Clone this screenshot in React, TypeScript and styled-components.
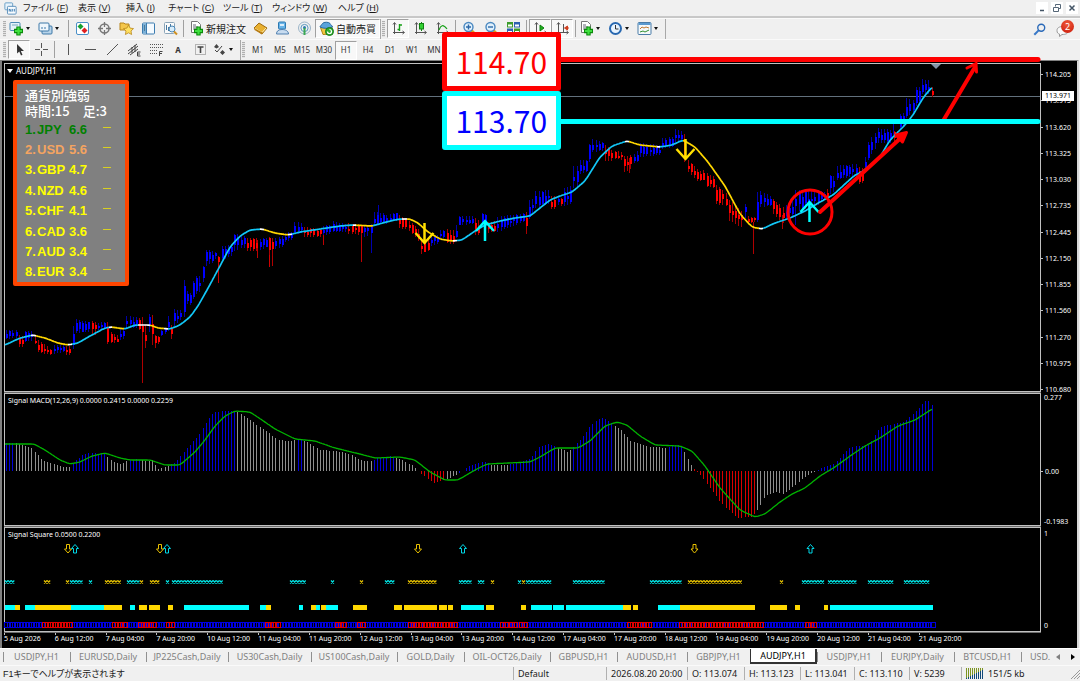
import React from "react";
import styled, { createGlobalStyle, css } from "styled-components";

/* ---------- data ---------- */

type Pt = [number, number];
type Span = [number, number, string];

const BLUE = "#0000ff";
const RED = "#ff0000";
const CYAN = "#00ffff";
const GOLD = "#ffd700";
const SKY = "#12c8f8";
const STEP = 3.17;
const BARS = Array.from({ length: 293 }, (_, i) => 6 + i * STEP);

/* [end x, direction, high, low, high at end, low at end] */
const swings: [number, "B" | "R", number, number, number, number][] = [
  [17, "B", 330, 339, 330, 338], [22, "R", 334, 347, 336, 347], [32, "B", 331, 342, 331, 341],
  [36, "R", 336, 343, 337, 345], [51, "R", 339, 352, 349, 355], [65, "B", 345, 354, 345, 352],
  [70, "R", 346, 355, 346, 355], [73, "B", 326, 349, 326, 349], [90, "B", 319, 333, 322, 332],
  [96, "R", 321, 333, 322, 335], [105, "B", 323, 330, 322, 329], [108, "R", 322, 344, 322, 344],
  [118, "R", 331, 344, 336, 342], [125, "B", 328, 341, 328, 338], [137, "B", 316, 328, 317, 328],
  [140, "R", 318, 330, 318, 330], [144, "R", 317, 341, 317, 341], [147, "R", 325, 348, 325, 348],
  [150, "B", 314, 332, 314, 332], [153, "R", 315, 345, 315, 345], [159, "R", 334, 350, 336, 343],
  [165, "B", 331, 337, 328, 334], [169, "B", 315, 332, 316, 331], [172, "R", 325, 339, 325, 339],
  [182, "B", 309, 328, 310, 318], [185, "B", 280, 317, 280, 317], [192, "B", 290, 304, 295, 305],
  [196, "B", 280, 300, 284, 295], [202, "B", 276, 294, 276, 291], [205, "B", 266, 282, 266, 281],
  [214, "B", 250, 266, 251, 262], [217, "B", 252, 259, 252, 259], [220, "R", 256, 262, 256, 262],
  [232, "B", 246, 262, 245, 255], [240, "B", 233, 252, 235, 249], [245, "B", 236, 248, 236, 248],
  [257, "R", 238, 251, 238, 251], [267, "B", 239, 251, 238, 247], [274, "R", 236, 254, 238, 256],
  [283, "B", 238, 250, 236, 246], [293, "B", 233, 242, 232, 240], [303, "B", 222, 234, 223, 233],
  [320, "R", 227, 237, 229, 237], [330, "B", 226, 236, 225, 234], [347, "B", 221, 232, 224, 232],
  [363, "R", 223, 234, 225, 235], [373, "B", 225, 237, 224, 234], [384, "B", 212, 226, 213, 222],
  [390, "B", 215, 225, 214, 222], [396, "B", 213, 221, 213, 221], [408, "R", 213, 228, 220, 229],
  [421, "R", 220, 230, 232, 244], [430, "R", 240, 254, 239, 250], [440, "B", 236, 246, 234, 243],
  [445, "B", 230, 238, 230, 238], [454, "R", 229, 243, 230, 244], [459, "B", 228, 240, 222, 236],
  [475, "B", 216, 225, 216, 224], [479, "R", 218, 235, 220, 235], [487, "B", 213, 227, 214, 228],
  [497, "R", 222, 233, 221, 231], [523, "B", 217, 232, 213, 222], [528, "R", 212, 234, 212, 234],
  [534, "B", 200, 220, 198, 213], [551, "B", 191, 208, 190, 203], [556, "R", 196, 209, 196, 209],
  [560, "B", 196, 205, 196, 204], [563, "R", 198, 206, 198, 206], [573, "B", 188, 206, 185, 203],
  [579, "B", 166, 188, 166, 184], [587, "B", 160, 174, 160, 172], [592, "B", 144, 163, 143, 160],
  [602, "B", 139, 152, 142, 151], [612, "R", 143, 161, 150, 161], [624, "R", 151, 159, 152, 160],
  [633, "R", 156, 172, 155, 168], [638, "B", 155, 163, 150, 162], [660, "B", 143, 157, 145, 155],
  [673, "B", 138, 149, 137, 147], [682, "B", 129, 143, 131, 142], [686, "R", 133, 162, 135, 162],
  [698, "R", 158, 170, 170, 182], [704, "R", 171, 181, 170, 180], [713, "R", 172, 186, 176, 188],
  [727, "R", 182, 204, 194, 206], [743, "R", 198, 220, 212, 228], [746, "B", 204, 218, 204, 218],
  [755, "R", 216, 224, 217, 222], [759, "B", 192, 222, 192, 222], [770, "B", 190, 207, 196, 206],
  [784, "R", 197, 211, 208, 224], [794, "B", 206, 219, 200, 218], [818, "B", 190, 212, 190, 205],
  [824, "B", 190, 202, 192, 200], [830, "R", 188, 202, 190, 202], [834, "B", 175, 194, 176, 192],
  [856, "B", 166, 180, 164, 176], [862, "R", 166, 184, 168, 183], [867, "B", 168, 178, 150, 170],
  [875, "B", 144, 162, 132, 148], [893, "B", 128, 143, 130, 143], [898, "R", 131, 143, 131, 142],
  [906, "B", 114, 130, 112, 126], [914, "B", 98, 118, 100, 112], [920, "B", 87, 107, 87, 104],
  [930, "B", 79, 94, 80, 94], [940, "R", 87, 97, 87, 97],
];

const spikes: [number, number, number, string][] = [
  [142, 330, 383, "#b00000"], [218, 256, 283, "#c00000"], [257, 240, 258, "#c00000"],
  [269, 240, 267, "#d00000"], [272, 240, 266, "#b00000"], [323, 232, 245, "#c00000"],
  [361, 232, 262, "#c00000"], [371, 232, 253, "#0000b0"], [378, 205, 222, "#0000b0"],
  [629, 158, 173, "#b00000"], [753, 222, 254, "#b00000"], [782, 215, 229, "#b00000"],
  [893, 122, 135, "#0000b0"], [795, 195, 225, "#0000b0"],
];

const average: Pt[] = [
  [5, 345], [20, 338], [33, 335], [45, 338], [58, 343], [68, 345], [78, 343], [90, 336], [105, 328],
  [111, 327], [125, 329], [135, 325], [150, 325], [158, 328], [170, 329], [180, 325], [190, 317],
  [198, 306], [207, 290], [220, 266], [230, 247], [240, 236], [250, 230], [262, 229], [275, 233],
  [288, 235], [300, 232], [320, 229], [340, 226], [352, 225], [372, 226], [390, 221], [400, 219],
  [410, 219], [418, 223], [428, 232], [440, 239], [452, 241], [462, 240], [475, 231], [485, 225],
  [500, 221], [515, 218], [530, 216], [540, 208], [550, 200], [560, 196], [572, 192], [585, 181],
  [600, 157], [612, 146], [627, 141], [640, 145], [660, 147], [672, 145], [683, 140], [695, 147],
  [708, 162], [725, 186], [740, 214], [752, 227], [762, 229], [775, 223], [790, 218], [805, 211],
  [820, 202], [833, 195], [845, 184], [855, 175], [862, 172], [880, 157], [890, 140], [905, 125],
  [913, 115], [923, 98], [932, 87],
];

const averageTone: Span[] = [
  [5, 31, SKY], [31, 36, "#fff"], [36, 68, GOLD], [68, 72, "#fff"], [72, 109, SKY], [109, 112, "#fff"],
  [112, 124, GOLD], [124, 138, SKY], [138, 150, "#fff"], [150, 164, GOLD], [164, 168, "#fff"],
  [168, 260, SKY], [260, 264, "#fff"], [264, 288, GOLD], [288, 292, "#fff"], [292, 353, SKY],
  [353, 356, "#fff"], [356, 373, GOLD], [373, 402, SKY], [402, 407, "#fff"], [407, 453, GOLD],
  [453, 457, "#fff"], [457, 625, SKY], [625, 629, "#fff"], [629, 657, GOLD], [657, 660, "#fff"],
  [660, 683, SKY], [683, 759, GOLD], [759, 763, "#fff"], [763, 932, SKY],
];

const macd: Pt[] = [
  [5, 443], [15, 443], [24, 446], [33, 449], [40, 458], [48, 463], [58, 465], [68, 468], [75, 461],
  [83, 454], [92, 453], [104, 454], [112, 461], [120, 464], [127, 461], [135, 459], [146, 461],
  [152, 460], [158, 469], [165, 467], [175, 462], [183, 453], [190, 445], [198, 435], [206, 423],
  [213, 412], [225, 411], [238, 412], [246, 417], [255, 424], [265, 430], [277, 440], [290, 441],
  [298, 439], [305, 441], [320, 450], [335, 451], [350, 454], [362, 461], [370, 461], [378, 458],
  [390, 456], [400, 459], [412, 465], [420, 473], [425, 477], [434, 483], [444, 480], [452, 477],
  [460, 472], [468, 466], [484, 461], [492, 465], [507, 465], [520, 462], [530, 459], [537, 448],
  [549, 444], [556, 447], [568, 452], [580, 440], [590, 426], [601, 417], [610, 422], [620, 429],
  [630, 441], [645, 446], [665, 448], [680, 444], [686, 456], [693, 468], [700, 475], [710, 488],
  [720, 502], [737, 518], [752, 517], [757, 510], [765, 496], [775, 492], [783, 494], [795, 485],
  [805, 477], [813, 472], [822, 468], [835, 463], [850, 447], [860, 446], [868, 445], [880, 427],
  [892, 424], [903, 422], [915, 412], [925, 401], [929, 401], [932, 405],
];

const SILVER = "#a8a8a8";
const macdTone: Span[] = [
  [0, 15, BLUE], [15, 70, SILVER], [70, 106, BLUE], [106, 128, SILVER], [128, 142, BLUE],
  [142, 170, SILVER], [170, 235, BLUE], [235, 295, SILVER], [295, 303, BLUE], [303, 372, SILVER],
  [372, 396, BLUE], [396, 417, SILVER], [417, 446, RED], [446, 459, SILVER], [459, 491, BLUE],
  [491, 510, SILVER], [510, 556, BLUE], [556, 573, SILVER], [573, 612, BLUE], [612, 668, SILVER],
  [668, 682, BLUE], [682, 694, SILVER], [694, 755, RED], [755, 815, SILVER], [815, 960, BLUE],
];

const signal: Pt[] = [
  [5, 444], [34, 444], [45, 450], [60, 460], [70, 464], [80, 462], [92, 456], [105, 453], [120, 458],
  [130, 460], [150, 460], [165, 465], [180, 465], [195, 452], [205, 440], [215, 426], [225, 416],
  [235, 411], [250, 412], [262, 420], [275, 429], [295, 439], [315, 441], [335, 448], [360, 454],
  [375, 458], [400, 457], [415, 460], [430, 472], [445, 480], [458, 480], [475, 470], [487, 464],
  [530, 462], [540, 457], [555, 448], [578, 448], [590, 441], [605, 426], [617, 422], [627, 425],
  [640, 436], [655, 445], [680, 446], [692, 451], [705, 466], [720, 488], [740, 510], [755, 517],
  [765, 514], [780, 502], [792, 494], [805, 488], [820, 476], [835, 467], [850, 456], [865, 446],
  [880, 438], [898, 426], [915, 420], [932, 409],
];

const crosses: Span[] = [
  [5, 15, CYAN], [44, 51, GOLD], [66, 69, GOLD], [70, 83, CYAN], [89, 92, CYAN], [105, 121, GOLD],
  [127, 139, CYAN], [140, 143, GOLD], [150, 159, GOLD], [166, 169, CYAN], [172, 223, CYAN],
  [290, 305, CYAN], [331, 334, CYAN], [360, 363, GOLD], [385, 394, CYAN], [408, 436, GOLD],
  [459, 473, CYAN], [478, 484, CYAN], [491, 494, GOLD], [518, 521, CYAN], [522, 525, GOLD],
  [526, 550, CYAN], [573, 604, CYAN], [650, 681, CYAN], [688, 742, GOLD], [780, 783, GOLD],
  [802, 824, CYAN], [828, 856, CYAN], [868, 894, CYAN], [904, 929, CYAN],
];

const blocks: Span[] = [
  [5, 15, CYAN], [15, 20, GOLD], [25, 35, CYAN], [35, 71, GOLD], [71, 104, CYAN], [104, 122, GOLD],
  [130, 135, CYAN], [139, 147, GOLD], [149, 160, GOLD], [168, 173, GOLD], [184, 249, CYAN],
  [260, 266, CYAN], [266, 271, GOLD], [299, 303, CYAN], [311, 316, GOLD], [316, 320, CYAN],
  [321, 326, GOLD], [326, 338, CYAN], [353, 367, GOLD], [394, 402, GOLD], [404, 437, GOLD],
  [439, 447, GOLD], [448, 453, GOLD], [461, 484, CYAN], [486, 494, GOLD], [521, 526, GOLD],
  [531, 552, CYAN], [553, 564, CYAN], [566, 623, CYAN], [623, 631, GOLD], [633, 638, GOLD],
  [658, 680, CYAN], [680, 755, GOLD], [770, 787, GOLD], [795, 800, GOLD], [824, 828, GOLD],
  [830, 933, CYAN],
];

const redZones: Pt[] = [
  [43, 72], [113, 126], [139, 155], [167, 174], [266, 279], [336, 346], [358, 365], [409, 457],
  [501, 508], [510, 517], [520, 527], [628, 651], [680, 763], [806, 814],
];

const times = [
  "5 Aug 2026", "6 Aug 12:00", "7 Aug 04:00", "7 Aug 20:00", "10 Aug 12:00", "11 Aug 04:00",
  "11 Aug 20:00", "12 Aug 12:00", "13 Aug 04:00", "13 Aug 20:00", "14 Aug 12:00", "17 Aug 04:00",
  "17 Aug 20:00", "18 Aug 12:00", "19 Aug 04:00", "19 Aug 20:00", "20 Aug 12:00", "21 Aug 04:00",
  "21 Aug 20:00",
];

const prices = [
  "114.205", "113.915", "113.620", "113.325", "113.030", "112.735", "112.445", "112.150", "111.855",
  "111.560", "111.270", "110.975", "110.680",
];

const strengths: [string, string, string, string][] = [
  ["1.", "JPY", "6.6", "#008000"], ["2.", "USD", "5.6", "#f4a460"], ["3.", "GBP", "4.7", "#ffff00"],
  ["4.", "NZD", "4.6", "#ffff00"], ["5.", "CHF", "4.1", "#ffff00"], ["6.", "CAD", "3.6", "#ffff00"],
  ["7.", "AUD", "3.4", "#ffff00"], ["8.", "EUR", "3.4", "#ffff00"],
];

const menus: [string, string][] = [
  ["ファイル", "F"], ["表示", "V"], ["挿入", "I"], ["チャート", "C"], ["ツール", "T"], ["ウィンドウ", "W"], ["ヘルプ", "H"],
];

const tabs: [string, number][] = [
  ["USDJPY,H1", 67], ["EURUSD,Daily", 76], ["JP225Cash,Daily", 82], ["US30Cash,Daily", 83],
  ["US100Cash,Daily", 86], ["GOLD,Daily", 67], ["OIL-OCT26,Daily", 86], ["GBPUSD,H1", 67],
  ["AUDUSD,H1", 70], ["GBPJPY,H1", 63], ["AUDJPY,H1", 67], ["USDJPY,H1", 64], ["EURJPY,Daily", 73],
  ["BTCUSD,H1", 67],
];

/* ---------- chart maths ---------- */

const noise = (n: number) => {
  const v = Math.sin(n * 12.9898) * 43758.5453;
  return v - Math.floor(v);
};

const linear = (pts: Pt[], x: number) => {
  let i = 0;
  while (i < pts.length - 2 && pts[i + 1][0] < x) i++;
  const [x0, y0] = pts[i];
  const [x1, y1] = pts[i + 1];
  const t = Math.min(1, Math.max(0, (x - x0) / (x1 - x0)));
  return y0 + (y1 - y0) * t;
};

const smooth = (pts: Pt[], x: number) =>
  (linear(pts, x - 3) + linear(pts, x - 1) + linear(pts, x) * 2 + linear(pts, x + 1) + linear(pts, x + 3)) / 6;

const trace = (pts: Pt[], from: number, to: number) => {
  const out: string[] = [];
  for (let x = from; x <= to; x += 1) out.push(`${x},${smooth(pts, x).toFixed(1)}`);
  return out.join(" ");
};

const toneAt = (spans: Span[], x: number) => (spans.find((s) => x >= s[0] && x < s[1]) || spans[0])[2];

const candles = BARS.map((x, i) => {
  const k = Math.max(0, swings.findIndex((s) => x <= s[0]));
  const [end, dir, h0, l0, h1, l1] = swings[k];
  const start = k ? swings[k - 1][0] : 4;
  const t = (x - start) / (end - start);
  const high = h0 + (h1 - h0) * t;
  const low = l0 + (l1 - l0) * t;
  const span = low - high;
  const top = high + span * (0.06 + 0.46 * noise(i + 1));
  const bottom = low - span * (0.04 + 0.38 * noise(i + 400));
  return { x, dir, high, low, top, bottom };
});

/* ---------- styles ---------- */

const Global = createGlobalStyle`
  *, *::before, *::after { box-sizing: border-box; }
  body { margin: 0; background: #f0f0f0; }
  button { font: inherit; color: inherit; border: 0; padding: 0; margin: 0; background: none; cursor: default; }
`;

const Shell = styled.div`
  min-height: 100vh;
  display: flex;
  flex-direction: column;
  overflow-x: hidden;
  background: #f0f0f0;
  color: #1a1a1a;
  font-family: "Noto Sans", "Noto Sans CJK JP", sans-serif;
  font-size: 9px;
  line-height: 12px;
`;

const MenuBar = styled.header`
  display: flex;
  align-items: center;
  height: 18px;
  padding: 0 2px 0 4px;
  border-bottom: 2px solid #c8c8c8;
`;

const MenuList = styled.nav`
  display: grid;
  grid-template-columns: 55px 48px 42px 55px 49px 66px 50px;
  margin-left: 6px;
  flex: 1;
  font-family: "Liberation Sans", "Noto Sans CJK JP", sans-serif;
  font-feature-settings: "palt";
`;

const MenuButton = styled.button`
  text-align: left;
  white-space: nowrap;
`;

const WindowButtons = styled.div`
  display: flex;
  gap: 3px;
`;

const WindowButton = styled.button`
  width: 12px;
  height: 12px;
  display: grid;
  place-items: center;
  background: #fff;
`;

const Toolbar = styled.div`
  display: flex;
  align-items: center;
  height: 21px;
  padding-left: 2px;
  border-top: 1px solid #fafafa;
`;

const ToolGroup = styled.div<{ $framed?: boolean }>`
  display: flex;
  align-items: center;
  height: 21px;
  ${(p) => p.$framed && css`
    border-right: 1px solid #a8a8a8;
    border-bottom: 1px solid #b4b4b4;
  `}
`;

const Grip = styled.span`
  width: 3px;
  height: 16px;
  margin: 0 2px 0 1px;
  background: repeating-linear-gradient(#b0b0b0 0 1px, #e4e4e4 1px 2px);
`;

const Divider = styled.span`
  width: 1px;
  height: 17px;
  margin: 0 2px;
  background: #a0a0a0;
`;

const ToolButton = styled.button<{ $pressed?: boolean; $wide?: boolean }>`
  display: flex;
  align-items: center;
  justify-content: center;
  flex: none;
  width: ${(p) => (p.$wide ? "auto" : "22px")};
  height: 19px;
  gap: 2px;
  padding: ${(p) => (p.$wide ? "0 3px" : "0")};
  white-space: nowrap;
  ${(p) => p.$pressed && css`
    background: #f8f8f8;
    border: 1px solid;
    border-color: #a0a0a0 #fff #fff #a0a0a0;
  `}
`;

const DropButton = styled.button`
  display: flex;
  align-items: center;
  flex: none;
  width: 29px;
  height: 19px;
  gap: 2px;
  padding-left: 1px;
  &::after {
    content: "";
    border: 2px solid transparent;
    border-top: 3px solid #111;
    border-bottom: 0;
  }
`;

const ToolText = styled.span`
  font-family: "Noto Sans CJK JP", sans-serif;
  font-size: 10px;
`;

const PeriodText = styled.span`
  font-size: 8px;
  color: #333;
`;

const ToolbarEnd = styled.div`
  display: flex;
  align-items: center;
  gap: 4px;
  margin-left: auto;
  padding-right: 4px;
`;

const Notice = styled.button`
  position: relative;
  width: 22px;
  height: 18px;
`;

const Badge = styled.span`
  position: absolute;
  top: 0;
  right: 2px;
  width: 13px;
  height: 13px;
  border-radius: 50%;
  background: radial-gradient(circle at 50% 30%, #f05a3c, #c81808);
  color: #fff;
  font-size: 9px;
  line-height: 13px;
  text-align: center;
`;

const ChartWindow = styled.main`
  flex: 1;
  display: flex;
  flex-direction: column;
  background: #000;
  border: solid #808080;
  border-width: 1px 2px 0 2px;
  border-right-color: #d8d8d8;
  margin: 0 1px 0 0;
  padding: 2px 0 0 2px;
  color: #fff;
  font-size: 7px;
  line-height: 9px;
`;

const Panel = styled.section<{ $height: number; $grow?: boolean }>`
  display: flex;
  flex: ${(p) => (p.$grow ? 1 : 0)} 0 ${(p) => p.$height}px;
  margin-bottom: 1px;
`;

const Plot = styled.div`
  position: relative;
  flex: 1;
  min-width: 0;
  border: 1px solid #c0c0c0;
  box-shadow: 0 1px 0 #6c6c6c;
`;

const Drawing = styled.svg`
  position: absolute;
  inset: 0;
  width: 100%;
  height: 100%;
  overflow: visible;
`;

const PlotTitle = styled.h2<{ $large?: boolean }>`
  position: relative;
  display: flex;
  align-items: center;
  gap: 3px;
  margin: 2px 0 0 ${(p) => (p.$large ? 2 : 3)}px;
  font-size: ${(p) => (p.$large ? 8 : 7)}px;
  font-weight: 400;
  line-height: 9px;
`;

const Axis = styled.div`
  position: relative;
  display: flex;
  flex-direction: column;
  justify-content: space-between;
  width: 36px;
`;

const PriceAxis = styled(Axis)`
  padding-top: 7px;
  margin-bottom: -2px;
`;

const MacdAxis = styled(Axis)`
  display: grid;
  grid-template-rows: 74px 1fr auto;
  align-items: start;
`;

const SquareAxis = styled(Axis)`
  padding: 2px 0;
`;

const AxisLabel = styled.span<{ $tick?: boolean }>`
  display: flex;
  align-items: center;
  gap: 2px;
  padding-left: ${(p) => (p.$tick ? 0 : 3)}px;
  white-space: nowrap;
  ${(p) => p.$tick && css`
    &::before {
      content: "";
      width: 2px;
      height: 1px;
      background: #c0c0c0;
    }
  `}
`;

const PriceTag = styled.span`
  position: absolute;
  top: 28px;
  left: 1px;
  right: 3px;
  height: 10px;
  padding-left: 3px;
  background: #fff;
  color: #000;
  line-height: 10px;
`;

const StrengthBox = styled.aside`
  position: absolute;
  top: 16px;
  left: 8px;
  width: 116px;
  height: 206px;
  padding: 3px 0 0 8px;
  border: 4px solid #ff4500;
  border-radius: 2px;
  background: #808080;
  font-size: 13px;
`;

const StrengthTitle = styled.div`
  color: #fff;
  font-family: "Noto Sans CJK JP", sans-serif;
  font-weight: 500;
  line-height: 16px;
  white-space: pre;
`;

const StrengthTable = styled.table`
  width: 90px;
  height: 163px;
  border-collapse: collapse;
  table-layout: fixed;
  font-family: "Liberation Sans", sans-serif;
  font-weight: 700;
  line-height: 13px;
  td { padding: 0; }
  td:nth-child(1) { width: 12px; }
  td:nth-child(2) { width: 32px; }
  td:nth-child(3) { width: 34px; }
`;

const Dash = styled.span`
  display: block;
  width: 8px;
  height: 1px;
  margin-bottom: 4px;
  background: #d8d020;
`;

const TargetTag = styled.div<{ $tone: string; $ink: string; $top: number }>`
  position: absolute;
  left: 42.2%;
  top: ${(p) => p.$top}px;
  width: 119px;
  height: 59px;
  border: 5px solid ${(p) => p.$tone};
  border-radius: 3px;
  background: #fff;
  color: ${(p) => p.$ink};
  font-family: "Noto Sans CJK JP", sans-serif;
  font-size: 30px;
  line-height: 48px;
  text-align: center;
`;

const TimeScale = styled.div`
  display: grid;
  grid-template-columns: repeat(19, 1fr);
  width: 90%;
  height: 15px;
  line-height: 8px;
  span { white-space: nowrap; }
  span::before {
    content: "";
    display: block;
    width: 1px;
    height: 2px;
    background: #c0c0c0;
  }
`;

const TabBar = styled.nav`
  display: flex;
  height: 17px;
  padding-left: 3px;
  border-top: 1px solid #fff;
  overflow: hidden;
`;

const Tab = styled.button<{ $w: number; $active?: boolean; $edge?: boolean }>`
  position: relative;
  flex: 0 0 ${(p) => p.$w}px;
  height: 15px;
  color: #808080;
  white-space: nowrap;
  &::before {
    content: "";
    position: absolute;
    left: 0;
    top: 3px;
    width: 1px;
    height: 10px;
    background: #909090;
  }
  ${(p) => p.$active && css`
    background: #fff;
    color: #000;
    border: 1px solid #333;
    border-width: 0 2px 2px 1px;
    &::before { display: none; }
  `}
`;

const TabRest = styled(Tab)`
  flex: 1;
  padding-left: 9px;
  text-align: left;
`;

const TabArrow = styled.button<{ $right?: boolean }>`
  width: 16px;
  display: grid;
  place-items: center;
  color: ${(p) => (p.$right ? "#000" : "#808080")};
`;

const StatusBar = styled.footer`
  display: flex;
  align-items: center;
  height: 16px;
  border-top: 1px solid #fafafa;
`;

const StatusCell = styled.span<{ $w?: number }>`
  display: flex;
  align-items: center;
  gap: 4px;
  height: 13px;
  padding-left: 4px;
  white-space: nowrap;
  flex: ${(p) => (p.$w ? `0 0 ${p.$w}px` : "1")};
  & + & { border-left: 1px solid #b0b0b0; }
`;

const StatusHelp = styled(StatusCell)`
  padding-left: 3px;
  font-family: "Liberation Sans", "Noto Sans CJK JP", sans-serif;
  font-feature-settings: "palt";
`;

const ResizeGrip = styled.svg`
  margin-left: auto;
`;

/* ---------- icons ---------- */

const Icon = ({ children, size = 15 }: { children: React.ReactNode; size?: number }) => (
  <svg width={size} height={size} viewBox="0 0 15 15" fill="none" aria-hidden="true">{children}</svg>
);

const Plus = () => <path d="M9.500 5.500v9M5 10h9" stroke="#0a8a0a" strokeWidth="4.400" />;
const PlusCore = () => <path d="M9.500 6.500v7M6 10h7" stroke="#3fe03f" strokeWidth="2.200" />;
const AxesPath = () => <path d="M3.500 2v11M2 11.500h11M2 3.500l1.500-2 1.500 2M11.500 10l2 1.500-2 1.500" stroke="#555" />;

const NewChart = () => <Icon><rect x="1" y="1.500" width="10" height="8" rx="1" fill="#e4f0f8" stroke="#4a88b4" /><path d="M3 4h6" stroke="#7ab" /><Plus /><PlusCore /></Icon>;
const Profiles = () => <Icon><rect x="4" y="5" width="10" height="8" rx="1" fill="#b8d4ea" stroke="#3c78a8" /><rect x="1" y="2" width="10" height="8" rx="1" fill="#eef6fc" stroke="#3c78a8" /><path d="M3 7h6" stroke="#3c78a8" strokeDasharray="2 1" /></Icon>;
const Market = () => <Icon><rect x="1.500" y="1.500" width="12" height="12" rx="1.500" fill="#fff" stroke="#4a90c8" /><path d="M5.500 2.500 8.500 5.500 5.500 8.500 2.500 5.500z" fill="#18a030" /><path d="M9.500 6.500 12.500 9.500 9.500 12.500 6.500 9.500z" fill="#e02020" /></Icon>;
const Target = () => <Icon><circle cx="7.500" cy="7.500" r="4.500" stroke="#777" strokeWidth="1.500" /><path d="M7.500 1v5M7.500 9v5M1 7.500h5M9 7.500h5" stroke="#777" strokeWidth="1.300" /></Icon>;
const Stars = () => <Icon><path d="M1 2h4l1 1h4v6H1z" fill="#f4c64a" stroke="#b8861c" /><path d="m9.500 4 1.600 3.100 3.400.5-2.500 2.400.6 3.500-3.100-1.700-3.100 1.700.6-3.500L4.500 7.600l3.400-.5z" fill="#ffe060" stroke="#b8861c" strokeWidth=".8" /></Icon>;
const Navigator = () => <Icon><rect x="1.500" y="2" width="12" height="11" rx="1" fill="#f4faff" stroke="#3c7cb0" /><path d="M5.500 2v11" stroke="#3c7cb0" /><rect x="2" y="2.500" width="3" height="10" fill="#7ab0d8" /><path d="M3 5h1M3 7h1M3 9h1" stroke="#245" /></Icon>;
const Tester = () => <Icon><rect x="1.500" y="1.500" width="10" height="11" rx="1" fill="#fbfbfb" stroke="#8aa4b8" /><path d="M3.500 9V4M5.500 10V6M7.500 8V3" stroke="#4878a0" /><circle cx="9" cy="8" r="3" fill="#d8ecfa" stroke="#4a88b8" /><path d="m11 10.500 3 3" stroke="#d09020" strokeWidth="2" /></Icon>;
const NewOrder = () => <Icon><path d="M2.500.5h6l3 3v8h-9z" fill="#fff" stroke="#777" /><path d="M4 4h3M4 6h5M4 8h3" stroke="#667" /><Plus /><PlusCore /></Icon>;
const GoldBar = () => <Icon><path d="m1 7 5-5 8 5-5 6z" fill="#e8b030" stroke="#a06c10" /><path d="m2 7.500 7 4 4-4.500" stroke="#fff0b0" /><path d="m1 7 .5 2L9 13.500l.5-2z" fill="#b87c14" /></Icon>;
const Person = () => <Icon><rect x="3.500" y="1" width="7" height="7" rx="1" fill="#68b4e8" stroke="#2c78b0" /><path d="M5 4h4" stroke="#fff" strokeWidth="1.500" /><path d="M1.500 13c0-3 2-4.500 5.500-4.500s6.500 1.500 6.500 4.500z" fill="#c8dcf0" stroke="#5080b0" /></Icon>;
const Radio = () => <Icon><circle cx="7.500" cy="7" r="6" stroke="#9ab4c8" /><circle cx="7.500" cy="7" r="3.600" stroke="#5a98c0" /><circle cx="7.500" cy="6.500" r="1.500" fill="#2c78b0" /><path d="M7.500 7v7" stroke="#3aa850" strokeWidth="2" /></Icon>;
const Robot = () => <Icon><path d="M1.500 6.500 13 6l-1 7-8 .5z" fill="#f4c840" stroke="#b08414" /><path d="M1 6c0-1.500 2-2 2.500-3.500C4.500.800 10 .800 11 2.500c.5 1.500 2.500 2 2.500 3.500-3 1.800-9.500 1.800-12.500 0z" fill="#5aa4dc" stroke="#2c6ca0" /><circle cx="10.500" cy="10.500" r="4" fill="#30b030" stroke="#187818" /><path d="M8.500 10.500a2 2 0 1 0 2-2" stroke="#fff" strokeWidth="1.200" /></Icon>;
const BarStyle = () => <Icon><AxesPath /><path d="M8.500 3v7M8.500 4h2.500M6.500 8.500h2" stroke="#18a018" strokeWidth="1.400" /></Icon>;
const CandleStyle = () => <Icon><AxesPath /><path d="M8.500 1v9" stroke="#108010" /><rect x="6.500" y="2.500" width="4" height="5.500" fill="#30d030" stroke="#108010" /></Icon>;
const LineStyle = () => <Icon><AxesPath /><path d="M4 9c2-5 4-6 8-1" stroke="#18a018" strokeWidth="1.200" /></Icon>;
const Zoom = ({ plus }: { plus?: boolean }) => <Icon><path d="m9.500 9.500 4 4" stroke="#d8a020" strokeWidth="2.600" /><circle cx="6.500" cy="6" r="4.500" fill="#e0f0fc" stroke="#4a88c0" strokeWidth="1.400" /><path d={plus ? "M4 6h5M6.500 3.500v5" : "M4 6h5"} stroke="#2c68a8" strokeWidth="1.400" /></Icon>;
const Tiles = () => <Icon><rect x="1" y="1" width="6" height="5.500" fill="#3c9c2c" /><rect x="8" y="1" width="6" height="5.500" fill="#2c60b0" /><rect x="1" y="7.500" width="6" height="5.500" fill="#2c60b0" /><rect x="8" y="7.500" width="6" height="5.500" fill="#3c9c2c" /><path d="M2 4.500h4M9 4.500h4M2 11h4M9 11h4" stroke="#fff" strokeWidth="2" /></Icon>;
const Scroll = () => <Icon><AxesPath /><path d="m7 4 4 3-4 3z" fill="#20b020" stroke="#108010" /></Icon>;
const Shift = () => <Icon><AxesPath /><path d="M8.500 3v8" stroke="#555" /><path d="m9.500 7 3-2v4zM11 7h3" fill="#d04020" stroke="#d04020" /></Icon>;
const Clock = () => <Icon><circle cx="7.500" cy="7.500" r="5.500" fill="#e8f4ff" stroke="#2868b0" strokeWidth="2" /><path d="M7.500 4v4h3" stroke="#333" /></Icon>;
const Template = () => <Icon><rect x="1" y="1.500" width="13" height="12" rx="1" fill="#f4f8fa" stroke="#4a7ca8" /><path d="M1.500 3h12" stroke="#5a9ad0" strokeWidth="2" /><path d="m3 8 2-2 2 1 2-1 3 1" stroke="#c07830" /><path d="m3 11 3-1 2 1 4-2" stroke="#309030" /></Icon>;
const Cursor = () => <Icon><path d="m5 2 .1 9.500 2.200-2 1.700 4 1.500-.7L8.800 9H12z" fill="#333" /></Icon>;
const Cross = () => <Icon><path d="M7.500 1v5M7.500 9v5M1 7.500h5M9 7.500h5" stroke="#555" /></Icon>;
const Stroke = ({ d }: { d: string }) => <Icon><path d={d} stroke="#555" /></Icon>;
const Channel = () => <Icon><path d="m1 9 9-7M1 12l10-8M3 13l8-6M5 5v6M8 3v7" stroke="#444" /><path d="M13.500 10h-3v4h3M10.500 12h2.500" stroke="#444" /></Icon>;
const Fibo = () => <Icon><path d="M1 2.500h13M1 5.500h13M1 8.500h8M1 11.500h8" stroke="#555" strokeDasharray="1 1" /><path d="M10.500 14V9.500h3M10.500 11.500h2.500" stroke="#444" /></Icon>;
const LetterFrame = () => <Icon><rect x="2.500" y="2.500" width="10" height="10" stroke="#777" strokeDasharray="1 1" /><path d="M4.500 5h6M7.500 5v6" stroke="#444" strokeWidth="1.600" /></Icon>;
const Shapes = () => <Icon><path d="m4.500 2 2.500 3-2.500 1.500L2 5zM10.500 8l2.500 2.500-2.500 2.500L8 10.500z" fill="#444" /><path d="m3 8 2 2 5-6" stroke="#444" /></Icon>;
const AppLogo = () => <Icon size={13}><rect x="1" y="1" width="9" height="8" rx="1" fill="#e8f4fc" stroke="#5a94c0" /><rect x="4" y="5" width="10" height="9" rx="1" fill="#f8fcff" stroke="#4a84b4" /><path d="M6 11V8l2 3V8M10 8v3M12 8v3" stroke="#3878b0" /></Icon>;

/* ---------- chart drawings ---------- */

const BigArrow = ({ x, y, down }: { x: number; y: number; down?: boolean }) => {
  const s = down ? -1 : 1;
  return (
    <path
      d={`M${x} ${y + s * 20}V${y}M${x - 9} ${y + s * 10}L${x} ${y}L${x + 9} ${y + s * 10}`}
      stroke={down ? "#ffe000" : CYAN}
      strokeWidth="2.500"
      fill="none"
    />
  );
};

const SmallArrow = ({ x, down }: { x: number; down?: boolean }) => (
  <path
    d={down ? `M${x} 553l-3.500-4h2v-4.500h3v4.500h2z` : `M${x} 544.500l-3.500 4h2v4.500h3v-4.500h2z`}
    stroke={down ? "#e8c000" : "#00d8e8"}
    fill="none"
  />
);

const PriceDrawing = () => (
  <Drawing viewBox="5 64 1035 327" preserveAspectRatio="none" aria-hidden="true">
    <path d="M5 96.500H1040" stroke="#62707c" shapeRendering="crispEdges" />
    <g shapeRendering="crispEdges">
      {spikes.map(([x, a, b, c]) => <path key={x} d={`M${x + 0.5} ${a}V${b}`} stroke={c} />)}
      {candles.map((c) => (
        <g key={c.x}>
          <path d={`M${Math.round(c.x) + 0.5} ${c.high}V${c.low}`} stroke={c.dir === "B" ? "#0000a8" : "#a80000"} />
          <rect x={Math.round(c.x)} y={c.top} width="2" height={Math.max(2, c.bottom - c.top)} fill={c.dir === "B" ? BLUE : RED} />
        </g>
      ))}
    </g>
    {averageTone.map(([a, b, c]) => (
      <polyline key={a} points={trace(average, a, b)} stroke={c} strokeWidth="1.700" fill="none" />
    ))}
    <BigArrow x={424.5} y={243} down />
    <BigArrow x={685.5} y={159} down />
    <BigArrow x={485} y={221} />
    <BigArrow x={809.5} y={202} />
    <path d="M931 64h10l-5 5z" fill="#8494a8" />
    <g stroke={RED} fill="none">
      <circle cx="810" cy="212" r="22" strokeWidth="3" />
      <path d="M820 212 904 135" strokeWidth="4" strokeLinecap="round" />
      <path d="M896 135 906.500 132.500 902.500 142z" strokeWidth="3" strokeLinejoin="round" fill={RED} />
      <path d="M943 121 975 67" strokeWidth="4" strokeLinecap="round" />
      <path d="M967 68 976 63.500 976.500 72" strokeWidth="3" strokeLinecap="round" />
      <path d="M556 59.500H1038" strokeWidth="5" strokeLinecap="round" />
    </g>
    <path d="M556 121.500H1038" stroke={CYAN} strokeWidth="5" strokeLinecap="round" />
  </Drawing>
);

const MacdDrawing = () => (
  <Drawing viewBox="5 394 1035 131" preserveAspectRatio="none" aria-hidden="true">
    <g shapeRendering="crispEdges">
      {BARS.map((x) => {
        const px = Math.round(x);
        return <path key={x} d={`M${px + 0.5} 471V${Math.round(linear(macd, px))}`} stroke={toneAt(macdTone, px)} opacity=".85" />;
      })}
    </g>
    <polyline points={trace(signal, 5, 932)} stroke="#00b400" strokeWidth="1.300" fill="none" />
  </Drawing>
);

const SquareDrawing = () => (
  <Drawing viewBox="5 528 1035 103" preserveAspectRatio="none" aria-hidden="true">
    {[68, 160, 418, 694.5].map((x) => <SmallArrow key={x} x={x} down />)}
    {[75, 167, 463, 810.5].map((x) => <SmallArrow key={x} x={x} />)}
    {crosses.map(([a, b, c]) => {
      const n = Math.max(1, Math.round((b - a) / STEP));
      return (
        <path
          key={a}
          stroke={c}
          strokeWidth="1.200"
          opacity=".9"
          d={Array.from({ length: n }, (_, i) => `M${(a + i * STEP).toFixed(1)} 580.500l3 3m0-3l-3 3`).join("")}
        />
      );
    })}
    {blocks.map(([a, b, c]) => <rect key={a} x={a} y="605" width={b - a} height="5" fill={c} />)}
    <g fill="none" shapeRendering="crispEdges">
      {BARS.map((x) => <rect key={x} x={Math.round(x) - 1.5} y="622.500" width="5" height="5" stroke="#0000e0" />)}
      {redZones.map(([a, b]) =>
        Array.from({ length: Math.round((b - a) / STEP) }, (_, i) => (
          <rect key={`${a}-${i}`} x={Math.round(a + i * STEP) - 0.5} y="622.500" width="5" height="5" stroke="#e00000" />
        )),
      )}
    </g>
  </Drawing>
);

/* ---------- page ---------- */

const Tool = ({ label, children, pressed }: { label: string; children: React.ReactNode; pressed?: boolean }) => (
  <ToolButton type="button" aria-label={label} aria-pressed={pressed} $pressed={pressed}>{children}</ToolButton>
);

export default function App() {
  return (
    <Shell>
      <Global />
      <MenuBar>
        <AppLogo />
        <MenuList aria-label="メニュー">
          {menus.map(([name, key]) => (
            <MenuButton type="button" key={name}>{name} (<u>{key}</u>)</MenuButton>
          ))}
        </MenuList>
        <WindowButtons>
          <WindowButton type="button" aria-label="最小化"><svg width="8" height="8"><path d="M2 6.500h4" stroke="#456" strokeWidth="1.500" /></svg></WindowButton>
          <WindowButton type="button" aria-label="元に戻す"><svg width="8" height="8" fill="none" stroke="#567"><path d="M2.500 2.500v-2h5v4h-2" /><path d="M.5 3.500h5v4h-5z" /></svg></WindowButton>
          <WindowButton type="button" aria-label="閉じる"><svg width="8" height="8"><path d="m1.500 1.500 5 5m0-5-5 5" stroke="#456" strokeWidth="1.500" /></svg></WindowButton>
        </WindowButtons>
      </MenuBar>

      <Toolbar>
        <ToolGroup $framed>
          <Grip />
          <DropButton type="button" aria-label="新規チャート"><NewChart /></DropButton>
          <DropButton type="button" aria-label="プロファイル"><Profiles /></DropButton>
          <Divider />
          <Tool label="気配値"><Market /></Tool>
          <Tool label="データウィンドウ"><Target /></Tool>
          <Tool label="お気に入り"><Stars /></Tool>
          <Tool label="ナビゲーター"><Navigator /></Tool>
          <Tool label="テスター"><Tester /></Tool>
          <Divider />
          <ToolButton type="button" $wide><NewOrder /><ToolText>新規注文</ToolText></ToolButton>
          <Tool label="メタエディター"><GoldBar /></Tool>
          <Tool label="コミュニティ"><Person /></Tool>
          <Tool label="シグナル"><Radio /></Tool>
          <ToolButton type="button" $wide $pressed aria-pressed><Robot /><ToolText>自動売買</ToolText></ToolButton>
        </ToolGroup>
        <ToolGroup $framed>
          <Grip />
          <Tool label="バーチャート" pressed><BarStyle /></Tool>
          <Tool label="ローソク足"><CandleStyle /></Tool>
          <Tool label="ラインチャート"><LineStyle /></Tool>
          <Divider />
          <Tool label="ズームイン"><Zoom plus /></Tool>
          <Tool label="ズームアウト"><Zoom /></Tool>
          <Tool label="整列"><Tiles /></Tool>
          <Divider />
          <Tool label="自動スクロール" pressed><Scroll /></Tool>
          <Tool label="チャートシフト" pressed><Shift /></Tool>
          <Divider />
          <DropButton type="button" aria-label="インディケータ"><NewOrder /></DropButton>
          <DropButton type="button" aria-label="時間足"><Clock /></DropButton>
          <DropButton type="button" aria-label="定型チャート"><Template /></DropButton>
        </ToolGroup>
        <ToolbarEnd>
          <Tool label="検索"><Icon size={13}><path d="M6.500 8.500 1.500 13.500" stroke="#3878c8" strokeWidth="2.400" /><circle cx="9.500" cy="5.500" r="4" stroke="#2868b8" strokeWidth="1.600" /></Icon></Tool>
          <Notice type="button" aria-label="通知">
            <svg width="22" height="18" fill="none"><path d="M9 6.500c-4 0-6 1.500-6 4s1 3 2.500 3.500v2.500l2.500-2c4 0 6-1 6-3.500z" fill="#fafafa" stroke="#999" /></svg>
            <Badge>2</Badge>
          </Notice>
        </ToolbarEnd>
      </Toolbar>

      <Toolbar>
        <ToolGroup $framed>
          <Grip />
          <Tool label="カーソル" pressed><Cursor /></Tool>
          <Tool label="クロスヘア"><Cross /></Tool>
          <Divider />
          <Tool label="垂直線"><Stroke d="M7.500 2v11" /></Tool>
          <Tool label="水平線"><Stroke d="M2 7.500h11" /></Tool>
          <Tool label="トレンドライン"><Stroke d="m2 13 11-11" /></Tool>
          <Tool label="チャネル"><Channel /></Tool>
          <Tool label="フィボナッチ"><Fibo /></Tool>
          <ToolButton type="button"><PeriodText><b>A</b></PeriodText></ToolButton>
          <Tool label="テキストラベル"><LetterFrame /></Tool>
          <DropButton type="button" aria-label="矢印"><Shapes /></DropButton>
        </ToolGroup>
        <ToolGroup>
          <Grip />
          {["M1", "M5", "M15", "M30", "H1", "H4", "D1", "W1", "MN"].map((p) => (
            <ToolButton type="button" key={p} $pressed={p === "H1"}><PeriodText>{p}</PeriodText></ToolButton>
          ))}
        </ToolGroup>
      </Toolbar>

      <ChartWindow>
        <Panel $height={329} $grow>
          <Plot>
            <PriceDrawing />
            <PlotTitle $large>
              <svg width="6" height="4" aria-hidden="true"><path d="M0 0h6L3 4z" fill="#fff" /></svg>
              AUDJPY,H1
            </PlotTitle>
            <StrengthBox>
              <StrengthTitle>通貨別強弱</StrengthTitle>
              <StrengthTitle>時間:15　足:3</StrengthTitle>
              <StrengthTable>
                <tbody>
                  {strengths.map(([rank, code, value, tone]) => (
                    <tr key={code} style={{ color: tone }}>
                      <td>{rank}</td><td>{code}</td><td>{value}</td><td><Dash /></td>
                    </tr>
                  ))}
                </tbody>
              </StrengthTable>
            </StrengthBox>
            <TargetTag $tone={RED} $ink={RED} $top={-32}>114.70</TargetTag>
            <TargetTag $tone={CYAN} $ink={BLUE} $top={27}>113.70</TargetTag>
          </Plot>
          <PriceAxis>
            {prices.map((p) => <AxisLabel key={p} $tick>{p}</AxisLabel>)}
            <PriceTag>113.971</PriceTag>
          </PriceAxis>
        </Panel>
        <Panel $height={133}>
          <Plot>
            <MacdDrawing />
            <PlotTitle>Signal MACD(12,26,9) 0.0000 0.2415 0.0000 0.2259</PlotTitle>
          </Plot>
          <MacdAxis>
            <AxisLabel>0.277</AxisLabel>
            <AxisLabel $tick>0.00</AxisLabel>
            <AxisLabel>-0.1983</AxisLabel>
          </MacdAxis>
        </Panel>
        <Panel $height={105}>
          <Plot>
            <SquareDrawing />
            <PlotTitle>Signal Square 0.0500 0.2200</PlotTitle>
          </Plot>
          <SquareAxis>
            <AxisLabel>1</AxisLabel>
            <AxisLabel>0</AxisLabel>
          </SquareAxis>
        </Panel>
        <TimeScale>{times.map((t) => <span key={t}>{t}</span>)}</TimeScale>
      </ChartWindow>

      <TabBar aria-label="チャート">
        {tabs.map(([name, w], i) => (
          <Tab type="button" key={i} $w={w} $active={name === "AUDJPY,H1"}>{name}</Tab>
        ))}
        <TabRest type="button" $w={30}>USD.</TabRest>
        <TabArrow type="button" aria-label="前へ"><svg width="4" height="6"><path d="M4 0v6L0 3z" fill="currentColor" /></svg></TabArrow>
        <TabArrow type="button" aria-label="次へ" $right><svg width="4" height="6"><path d="M0 0v6l4-3z" fill="currentColor" /></svg></TabArrow>
      </TabBar>

      <StatusBar>
        <StatusHelp>F1キーでヘルプが表示されます</StatusHelp>
        <StatusCell $w={93}>Default</StatusCell>
        <StatusCell $w={81}>2026.08.20 20:00</StatusCell>
        <StatusCell $w={57}>O: 113.074</StatusCell>
        <StatusCell $w={56}>H: 113.123</StatusCell>
        <StatusCell $w={54}>L: 113.041</StatusCell>
        <StatusCell $w={55}>C: 113.110</StatusCell>
        <StatusCell $w={52}>V: 5239</StatusCell>
        <StatusCell $w={119}>
          <svg width="18" height="11" aria-hidden="true">
            {Array.from({ length: 9 }, (_, i) => (
              <g key={i}>
                <rect x={i * 2} y="0" width="1" height={10 - i} fill="#7c9420" />
                <rect x={i * 2} y={10 - i} width="1" height={i + 1} fill="#104878" />
              </g>
            ))}
          </svg>
          151/5 kb
          <ResizeGrip width="10" height="10" aria-hidden="true"><path d="M1 10 10 1M4 10l6-6M7 10l3-3" stroke="#999" /></ResizeGrip>
        </StatusCell>
      </StatusBar>
    </Shell>
  );
}
